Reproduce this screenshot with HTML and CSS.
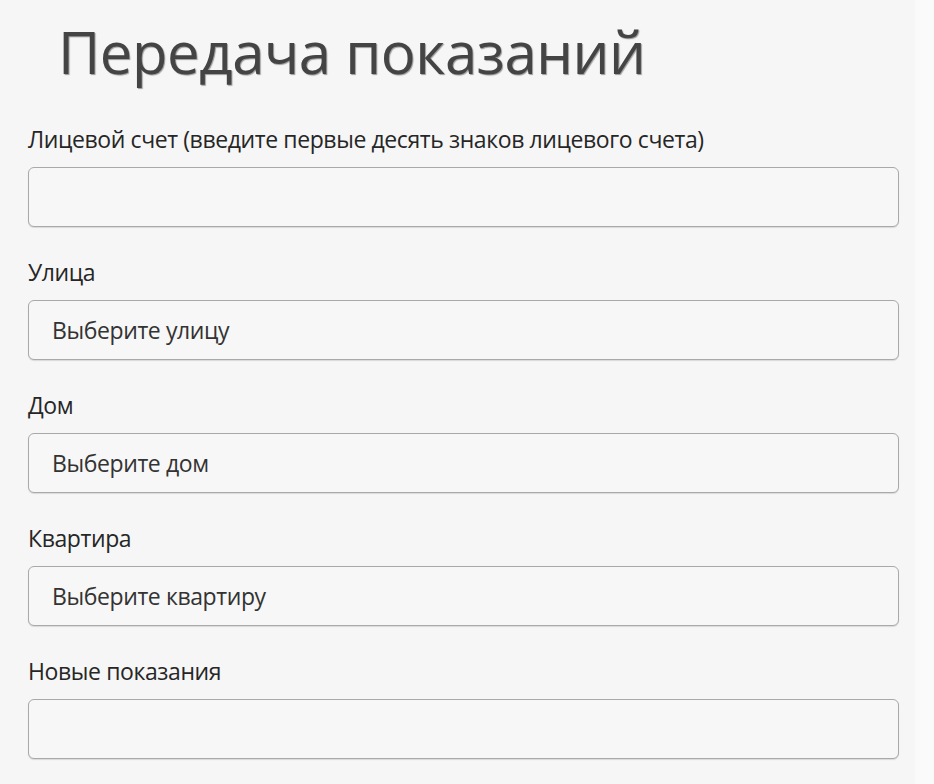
FILE: index.html
```html
<!DOCTYPE html>
<html lang="ru">
<head>
<meta charset="utf-8" />
<title>Передача показаний</title>
<link rel="stylesheet" href="styles.css">
</head>
<body>
  <div class="page">
    <h1 class="title">Передача показаний</h1>
    <form class="readings">
      <div class="field">
        <label for="account">Лицевой счет (введите первые десять знаков лицевого счета)</label>
        <input type="text" id="account" />
      </div>
      <div class="field">
        <label for="street">Улица</label>
        <input type="text" id="street" placeholder="Выберите улицу" />
      </div>
      <div class="field">
        <label for="house">Дом</label>
        <input type="text" id="house" placeholder="Выберите дом" />
      </div>
      <div class="field">
        <label for="flat">Квартира</label>
        <input type="text" id="flat" placeholder="Выберите квартиру" />
      </div>
      <div class="field">
        <label for="value">Новые показания</label>
        <input type="text" id="value" />
      </div>
    </form>
  </div>
</body>
</html>
```

FILE: styles.css
```css
html { height: 100%; background: #fafafa; }
body { margin: 0; font-family: "Open Sans", "Noto Sans", sans-serif; color: #222; }
.page { width: 915px; min-height: 784px; background: #f6f6f6; padding: 16px 0 0 28px; box-sizing: border-box; }
.title { margin: 0 0 36px 30px; font-size: 58px; line-height: 72px; font-weight: 400; color: #444; letter-spacing: -0.4px; text-shadow: 1px 1px 1px #999; }
.readings { display: flex; flex-direction: column; gap: 30px; width: 871px; }
.field { display: flex; flex-direction: column; gap: 13px; }
.field label { font-size: 23px; line-height: 30px; letter-spacing: -0.4px; color: #262626; }
.field input { height: 60px; box-sizing: border-box; border: 1px solid #a9a9a9; border-radius: 6px; background: #f7f7f7; padding: 0 23px; font-family: inherit; font-size: 23px; letter-spacing: -0.4px; color: #222; box-shadow: 0 1px 1px rgba(0,0,0,0.12); }
.field input::placeholder { color: #333; opacity: 1; }
```
